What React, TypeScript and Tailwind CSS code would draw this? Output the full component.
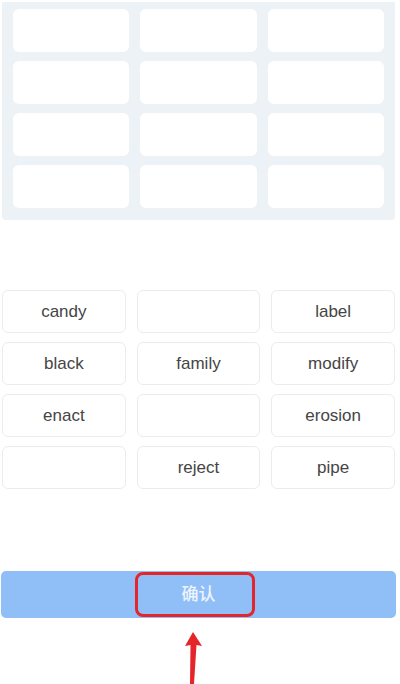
import React from "react";

const words: string[] = [
  "candy", "", "label",
  "black", "family", "modify",
  "enact", "", "erosion",
  "", "reject", "pipe",
];

function AnswerSlots() {
  return (
    <div className="ml-[2px] mr-[5px] mt-[2px] h-[218px] rounded-b-sm bg-[#edf2f6] px-[11px] pt-[7px]">
      <div className="grid grid-cols-3 gap-x-[11px] gap-y-[9px]">
        {Array.from({ length: 12 }).map((_, idx) => (
          <div key={idx} className="h-[43px] rounded-md bg-white" />
        ))}
      </div>
    </div>
  );
}

function WordGrid() {
  return (
    <div className="ml-[2px] mr-[5px] mt-[70px] grid grid-cols-3 gap-x-[11px] gap-y-[9px]">
      {words.map((word, idx) => (
        <div
          key={idx}
          className="flex h-[43px] items-center justify-center rounded-md border border-[#ececec] bg-white text-[17px] text-[#454545]"
        >
          {word}
        </div>
      ))}
    </div>
  );
}

export default function App() {
  return (
    <div
      className="relative flex h-[684px] w-[400px] flex-col overflow-hidden bg-white"
      style={{ fontFamily: '"Liberation Sans", "Noto Sans CJK SC", sans-serif' }}
    >
      <AnswerSlots />
      <WordGrid />

      <div className="relative ml-[1px] mr-[4px] mt-[82px]">
        <button className="flex h-[47px] w-full items-center justify-center rounded-[5px] bg-[#90bff8] text-[17px] font-medium text-[#eef4fd]">
          确认
        </button>
        {/* annotation box */}
        <div className="pointer-events-none absolute left-[134px] top-[1px] h-[45px] w-[120px] rounded-lg border-[3px] border-[#e3262b]" />
      </div>

      {/* annotation arrow */}
      <svg
        className="absolute left-[180px] top-[628px]"
        width="28"
        height="56"
        viewBox="0 0 28 56"
      >
        <path d="M13 4 L22 18 L16.5 17 L14 56 L10 56 L10.5 17 L5 18 Z" fill="#e4262a" />
      </svg>
    </div>
  );
}
